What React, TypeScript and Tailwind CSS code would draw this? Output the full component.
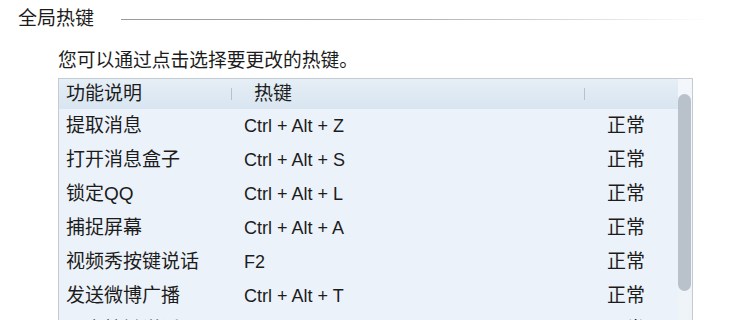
import React from "react";

const rows: [string, string][] = [
  ["提取消息", "Ctrl + Alt + Z"],
  ["打开消息盒子", "Ctrl + Alt + S"],
  ["锁定QQ", "Ctrl + Alt + L"],
  ["捕捉屏幕", "Ctrl + Alt + A"],
  ["视频秀按键说话", "F2"],
  ["发送微博广播", "Ctrl + Alt + T"],
  ["语音按键说话", "按住 Ctrl键"],
];

export default function App() {
  return (
    <div
      className="w-[750px] h-[320px] overflow-hidden bg-white text-[#1c1c1c]"
      style={{ fontFamily: '"Liberation Sans", "Noto Sans CJK SC", sans-serif' }}
    >
      <div className="flex items-center pt-[9px] pl-[18px]">
        <span className="text-[19px] leading-[20px]">全局热键</span>
        <div className="ml-[27px] mr-[40px] h-px flex-1 bg-gradient-to-r from-[#9a9a9a] via-[#b0b0b0] to-transparent" />
      </div>
      <div className="ml-[58px] mt-[22px] text-[18.75px] leading-[20px]">
        您可以通过点击选择要更改的热键。
      </div>
      <div className="ml-[58px] mt-[7px] flex w-[635px] border border-[#c3cbd3] bg-[#ecf2f9]">
        <div className="flex-1">
          <div className="flex h-[30px] items-center bg-gradient-to-b from-[#e6eef6] to-[#d8e5f0] text-[19px]">
            <div className="flex w-[173px] items-center justify-between pl-[7px]">
              <span>功能说明</span>
              <span className="h-[12px] w-px bg-[#b8c2cc]" />
            </div>
            <div className="flex w-[353px] items-center justify-between pl-[22px]">
              <span>热键</span>
              <span className="h-[12px] w-px bg-[#b8c2cc]" />
            </div>
            <div className="flex-1" />
          </div>
          {rows.map(([name, key]) => (
            <div key={name} className="flex h-[34px] items-center text-[19px]">
              <div className="w-[173px] pl-[7px]">{name}</div>
              <div className="w-[353px] pl-[12px] text-[18px]">{key}</div>
              <div className="flex-1 pl-[22px]">正常</div>
            </div>
          ))}
        </div>
        <div className="w-[14px] bg-gradient-to-b from-[#f3f6fa] to-[#eef3f8]">
          <div className="mt-[15px] h-[197px] w-[13px] rounded-full bg-[#b9c2cb]" />
        </div>
      </div>
    </div>
  );
}
